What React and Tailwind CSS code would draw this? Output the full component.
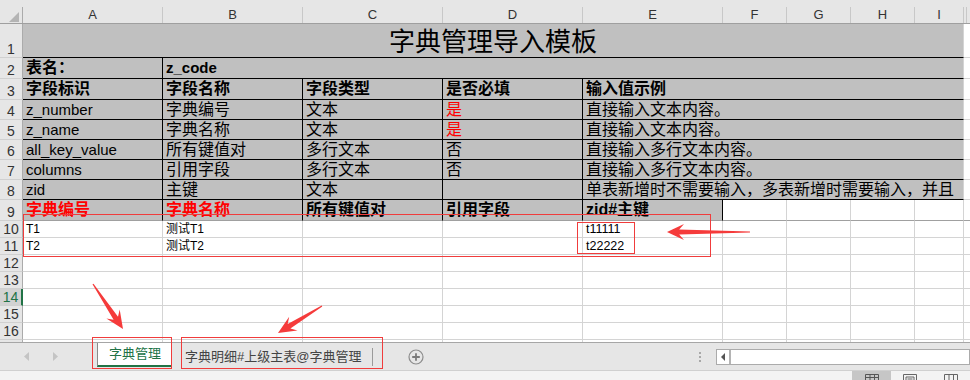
import clsx from "clsx";

const W = ["w-[140px]", "w-[140px]", "w-[140px]", "w-[140px]", "w-[140px]", "w-[64px]", "w-[64px]", "w-[64px]", "w-[49px]"];
const LETTERS = ["A", "B", "C", "D", "E", "F", "G", "H", "I"];

const GRAY = "bg-[#c0c0c0] border-r-black border-b-black";
const LIGHT = "bg-white border-r-[#d4d4d4] border-b-[#d4d4d4]";

// arrow polygon from tail to tip, head swept back like a screenshot tool arrow
function arrowPoints(x1, y1, x2, y2, L = 18, hw = 8, sw = 2.5) {
  const len = Math.hypot(x2 - x1, y2 - y1);
  const dx = (x2 - x1) / len;
  const dy = (y2 - y1) / len;
  const nx = -dy;
  const ny = dx;
  const hb = [x2 - dx * L, y2 - dy * L];
  const b = [x2 - dx * L * 0.72, y2 - dy * L * 0.72];
  const pts = [
    [x1 + nx * 0.6, y1 + ny * 0.6],
    [b[0] + nx * sw, b[1] + ny * sw],
    [hb[0] + nx * hw, hb[1] + ny * hw],
    [x2, y2],
    [hb[0] - nx * hw, hb[1] - ny * hw],
    [b[0] - nx * sw, b[1] - ny * sw],
    [x1 - nx * 0.6, y1 - ny * 0.6],
  ];
  return pts.map((p) => p[0].toFixed(1) + "," + p[1].toFixed(1)).join(" ");
}

function Cell({ w, cls, children }) {
  return (
    <div
      className={clsx(
        "shrink-0 flex items-center overflow-hidden whitespace-nowrap pl-[3px] border-r border-b leading-[18px]",
        w,
        cls
      )}
    >
      {children}
    </div>
  );
}

function RowHead({ n, hidden }) {
  const active = n === 14;
  return (
    <div
      className={clsx(
        "w-[23px] shrink-0 flex items-end justify-center border-b border-b-[#d0d0d0] text-[14px] leading-[16px]",
        active
          ? "bg-[#d2d2d2] text-[#217346] border-r-2 border-r-[#217346]"
          : "bg-[#e6e6e6] text-[#333] border-r border-r-[#ababab]"
      )}
    >
      {hidden ? null : n}
    </div>
  );
}

function Row({ n, h, jCls, hidden, children }) {
  return (
    <div className={clsx("flex", h)}>
      <RowHead n={n} hidden={hidden} />
      {children}
      <div className={clsx("flex-1 border-b", jCls || "border-b-[#d4d4d4]")} />
    </div>
  );
}

const dataRows = [
  { n: 4, a: "z_number", b: "字典编号", c: "文本", d: "是", red: true, e: "直接输入文本内容。" },
  { n: 5, a: "z_name", b: "字典名称", c: "文本", d: "是", red: true, e: "直接输入文本内容。" },
  { n: 6, a: "all_key_value", b: "所有键值对", c: "多行文本", d: "否", e: "直接输入多行文本内容。" },
  { n: 7, a: "columns", b: "引用字段", c: "多行文本", d: "否", e: "直接输入多行文本内容。" },
  { n: 8, a: "zid", b: "主键", c: "文本", d: "", e: "单表新增时不需要输入，多表新增时需要输入，并且" },
];

const valueRows = [
  { n: 10, a: "T1", b: "测试T1", e: "t11111" },
  { n: 11, a: "T2", b: "测试T2", e: "t22222" },
];

export default function App() {
  return (
    <div className="relative w-[970px] h-[380px] overflow-hidden bg-white text-black font-['Liberation_Sans','Noto_Sans_CJK_SC',sans-serif]">
      {/* sheet grid */}
      <div className="h-[342px] overflow-hidden">
        {/* column header */}
        <div className="flex h-[24px] bg-[#e6e6e6] border-b border-b-[#9f9f9f]">
          <div className="w-[23px] shrink-0 pt-[7px]">
            <div className="relative h-full border-r border-r-[#ababab]">
              <svg className="absolute left-[9px] top-[5px]" width="10" height="10" viewBox="0 0 10 10">
                <polygon points="10,0 10,10 0,10" fill="#b4b4b4" />
              </svg>
            </div>
          </div>
          {LETTERS.map((l, i) => (
            <div key={l} className={clsx("shrink-0 pt-[7px]", W[i])}>
              <div className="h-full flex items-center justify-center border-r border-r-[#c8c8c8] text-[13px] text-[#333]">
                {l}
              </div>
            </div>
          ))}
          <div className="flex-1 pt-[7px]">
            <div className="h-full border-l border-l-[#c8c8c8] ml-[2px]" />
          </div>
        </div>

        {/* row 1 title */}
        <Row n={1} h="h-[34px]">
          <div className="w-[941px] shrink-0 flex items-center justify-center pt-[2px] bg-[#c0c0c0] border-r border-b border-r-[#d4d4d4] border-b-black text-[26px] leading-[30px]">
            字典管理导入模板
          </div>
        </Row>

        {/* row 2 */}
        <Row n={2} h="h-[21px]">
          <Cell w={W[0]} cls={clsx(GRAY, "font-bold text-[16px]")}>表名：</Cell>
          <Cell w="w-[801px]" cls="bg-[#c0c0c0] border-r-[#d4d4d4] border-b-black font-bold text-[15px]">
            z_code
          </Cell>
        </Row>

        {/* row 3 */}
        <Row n={3} h="h-[21px]">
          {["字段标识", "字段名称", "字段类型", "是否必填"].map((t, i) => (
            <Cell key={t} w={W[i]} cls={clsx(GRAY, "font-bold text-[16px]")}>
              {t}
            </Cell>
          ))}
          <Cell w="w-[381px]" cls="bg-[#c0c0c0] border-r-[#d4d4d4] border-b-black font-bold text-[16px]">
            输入值示例
          </Cell>
        </Row>

        {/* rows 4-8 */}
        {dataRows.map((r) => (
          <Row key={r.n} n={r.n} h="h-[20px]">
            <Cell w={W[0]} cls={clsx(GRAY, "text-[15px]")}>{r.a}</Cell>
            <Cell w={W[1]} cls={clsx(GRAY, "text-[16px]")}>{r.b}</Cell>
            <Cell w={W[2]} cls={clsx(GRAY, "text-[16px]")}>{r.c}</Cell>
            <Cell w={W[3]} cls={clsx(GRAY, "text-[16px]", r.red && "text-[#ff0000]")}>{r.d}</Cell>
            <Cell w="w-[381px]" cls="bg-[#c0c0c0] border-r-[#d4d4d4] border-b-black text-[16px]">
              {r.e}
            </Cell>
          </Row>
        ))}

        {/* row 9 */}
        <Row n={9} h="h-[21px]" jCls="border-b-[#a0a0a0]">
          <Cell w={W[0]} cls="bg-[#c0c0c0] border-r-black border-b-[#a0a0a0] font-bold text-[16px] text-[#ff0000]">
            字典编号
          </Cell>
          <Cell w={W[1]} cls="bg-[#c0c0c0] border-r-black border-b-[#a0a0a0] font-bold text-[16px] text-[#ff0000]">
            字典名称
          </Cell>
          <Cell w={W[2]} cls="bg-[#c0c0c0] border-r-black border-b-[#a0a0a0] font-bold text-[16px]">
            所有键值对
          </Cell>
          <Cell w={W[3]} cls="bg-[#c0c0c0] border-r-black border-b-[#a0a0a0] font-bold text-[16px]">
            引用字段
          </Cell>
          <Cell w={W[4]} cls="bg-[#c0c0c0] border-r-black border-b-[#a0a0a0] font-bold text-[16px]">
            zid#主键
          </Cell>
          {[5, 6, 7, 8].map((i) => (
            <Cell key={i} w={W[i]} cls="bg-white border-r-[#d4d4d4] border-b-[#a0a0a0]" />
          ))}
        </Row>

        {/* rows 10-11 */}
        {valueRows.map((r) => (
          <Row key={r.n} n={r.n} h="h-[17px]">
            <Cell w={W[0]} cls={clsx(LIGHT, "text-[12px]")}>{r.a}</Cell>
            <Cell w={W[1]} cls={clsx(LIGHT, "text-[12px]")}>{r.b}</Cell>
            <Cell w={W[2]} cls={LIGHT} />
            <Cell w={W[3]} cls={LIGHT} />
            <Cell w={W[4]} cls={clsx(LIGHT, "text-[12.5px]")}>{r.e}</Cell>
            {[5, 6, 7, 8].map((i) => (
              <Cell key={i} w={W[i]} cls={LIGHT} />
            ))}
          </Row>
        ))}

        {/* empty rows */}
        {[12, 13, 14, 15, 16, 17].map((n) => (
          <Row key={n} n={n} h="h-[17px]" hidden={n === 17}>
            {W.map((w, i) => (
              <Cell key={i} w={w} cls={LIGHT} />
            ))}
          </Row>
        ))}
      </div>

      {/* sheet tabs bar */}
      <div className="flex items-center h-[28px] bg-[#e6e6e6] border-t border-t-[#a6a6a6]">
        <div className="w-[97px] shrink-0 flex items-center">
          <svg className="ml-[24px]" width="5" height="9" viewBox="0 0 5 9">
            <polygon points="5,0 5,9 0,4.5" fill="#c4c4c4" />
          </svg>
          <svg className="ml-[24px]" width="5" height="9" viewBox="0 0 5 9">
            <polygon points="0,0 0,9 5,4.5" fill="#c4c4c4" />
          </svg>
        </div>
        <div className="w-[75px] shrink-0 self-start h-[24px] flex items-center justify-center bg-white border-l border-l-[#8a8a8a] border-b-2 border-b-[#217346] text-[13px] text-[#217346]">
          字典管理
        </div>
        <div className="w-[203px] shrink-0 flex items-center pl-[13px] text-[13px] text-[#444]">
          <span>字典明细#上级主表@字典管理</span>
          <span className="ml-[11px] w-px h-[18px] bg-[#9a9a9a]" />
        </div>
        <svg className="ml-[33px] shrink-0" width="16" height="16" viewBox="0 0 16 16">
          <circle cx="8" cy="8" r="7" fill="none" stroke="#8c8c8c" strokeWidth="1.2" />
          <path d="M8 4.2v7.6M4.2 8h7.6" stroke="#7a7a7a" strokeWidth="1.8" />
        </svg>
        <div className="ml-[275px] shrink-0 flex flex-col gap-[2px]">
          <span className="w-[2px] h-[2px] bg-[#a8a8a8]" />
          <span className="w-[2px] h-[2px] bg-[#a8a8a8]" />
          <span className="w-[2px] h-[2px] bg-[#a8a8a8]" />
        </div>
        <div className="ml-[15px] w-[254px] h-[16px] shrink-0 flex bg-white border border-[#ababab]">
          <div className="w-[14px] flex items-center justify-center border-r-2 border-r-[#b4b4b4]">
            <svg width="4" height="8" viewBox="0 0 4 8">
              <polygon points="4,0 4,8 0,4" fill="#555" />
            </svg>
          </div>
        </div>
      </div>

      {/* status bar */}
      <div className="flex h-[10px] bg-[#f3f3f3] border-t border-t-[#d0d0d0]">
        <div className="ml-[852px] w-[39px] bg-[#c6c6c6] flex justify-center pt-[3px]">
          <svg width="14" height="8" viewBox="0 0 14 8">
            <path d="M0.5 0.5h13v8M0.5 0.5v8M0.5 3.5h13M5 0.5v8M9.5 0.5v8" fill="none" stroke="#555" />
          </svg>
        </div>
        <div className="ml-[12px] pt-[3px]">
          <svg width="14" height="8" viewBox="0 0 14 8">
            <path d="M0.5 8V0.5h13V8M3 8V3h8v5M4.5 5h5" fill="none" stroke="#666" />
          </svg>
        </div>
        <div className="ml-[27px] pt-[3px]">
          <svg width="14" height="8" viewBox="0 0 14 8">
            <path d="M0.5 8V0.5h13V8M5 0.5V8M9.5 0.5V8" fill="none" stroke="#666" />
          </svg>
        </div>
      </div>

      {/* annotations */}
      <div className="absolute left-[23px] top-[214px] w-[688px] h-[43px] border border-[#f03c3c]" />
      <div className="absolute left-[577px] top-[222px] w-[58px] h-[32px] border border-[#f03c3c]" />
      <div className="absolute left-[92px] top-[337px] w-[80px] h-[32px] border border-[#f03c3c]" />
      <div className="absolute left-[181px] top-[337px] w-[202px] h-[32px] border border-[#f03c3c]" />
      <svg className="absolute inset-0 pointer-events-none" width="970" height="380" viewBox="0 0 970 380">
        <polygon points={arrowPoints(750, 232, 667, 232, 17, 8, 2.6)} fill="#f53b3b" />
        <polygon points={arrowPoints(93, 284, 123, 329, 18, 8, 2.6)} fill="#f53b3b" />
        <polygon points={arrowPoints(322, 306, 278, 333, 18, 8, 2.6)} fill="#f53b3b" />
      </svg>
    </div>
  );
}
